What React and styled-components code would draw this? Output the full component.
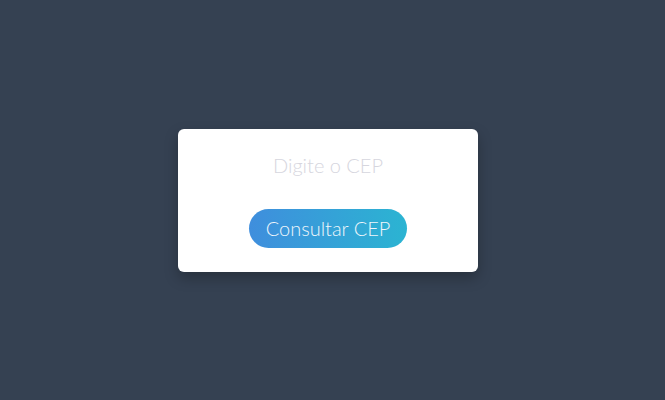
import styled, { createGlobalStyle } from 'styled-components';

const GlobalStyle = createGlobalStyle`
    html, body {
        margin: 0;
        padding: 0;
        background-color: #354152;
    }
    * {
        box-sizing: border-box;
    }
`;

const App = () => {
    return (
        <Page>
            <GlobalStyle />
            <Card>
                <CepInput placeholder="Digite o CEP" />
                <SearchButton>Consultar CEP</SearchButton>
            </Card>
        </Page>
    );
};

export default App;

const Page = styled.div`
    display: flex;
    align-items: center;
    justify-content: center;
    width: 100vw;
    height: 100vh;
    padding-right: 9px;
    background-color: #354152;
`;

const Card = styled.div`
    display: flex;
    flex-direction: column;
    align-items: center;
    width: 300px;
    padding: 16px 0 24px;
    gap: 24px;
    background-color: #fff;
    border-radius: 6px;
    box-shadow: 0 6px 14px rgba(0, 0, 0, 0.25);
`;

const CepInput = styled.input`
    width: 100%;
    height: 40px;
    border: none;
    outline: none;
    background: transparent;
    text-align: center;
    font-family: Lato, 'Open Sans', sans-serif;
    font-weight: 300;
    font-size: 20px;
    color: #555;

    &::placeholder {
        color: #d6d6de;
    }
`;

const SearchButton = styled.button`
    height: 39px;
    width: 158px;
    padding: 0;
    border: none;
    border-radius: 20px;
    background: linear-gradient(90deg, #3f8edd, #2bb4d2);
    color: #eef6fb;
    font-family: Lato, 'Open Sans', sans-serif;
    font-weight: 300;
    font-size: 20px;
    cursor: pointer;
`;
